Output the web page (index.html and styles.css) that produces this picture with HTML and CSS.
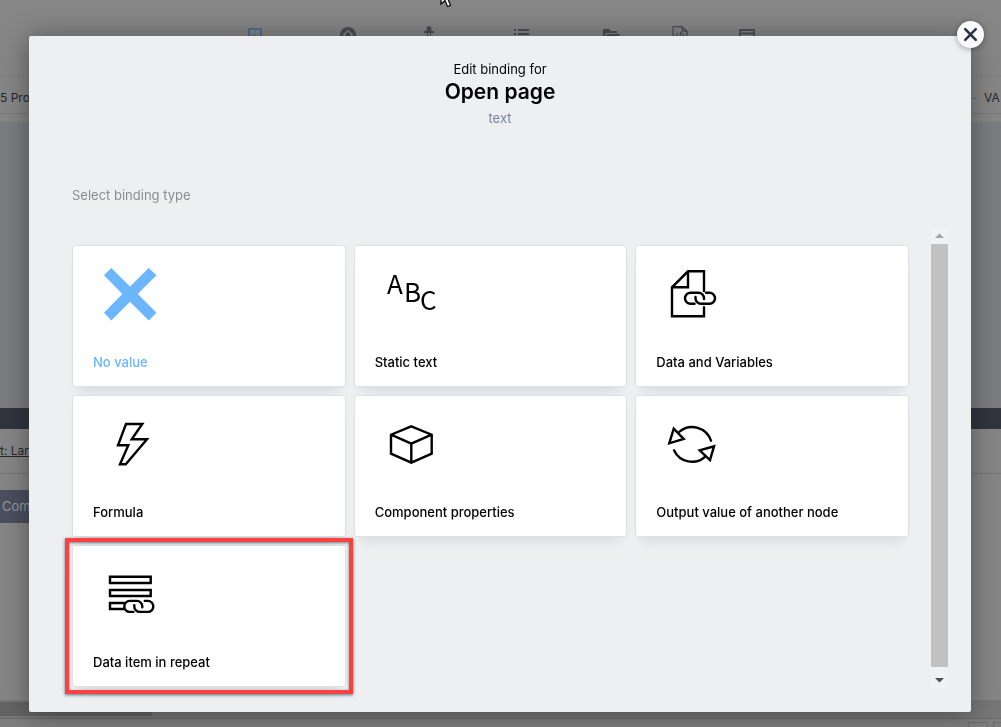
FILE: index.html
```html
<!DOCTYPE html>
<html lang="en">
<head>
<meta charset="utf-8">
<title>Edit binding</title>
<link rel="stylesheet" href="styles.css">
</head>
<body>
<div class="app" aria-hidden="true">
  <div class="toolbar">
    <svg class="tool tool-active" viewBox="0 0 18 18"><path d="M3 3h12v14H3z" fill="none" stroke="currentColor" stroke-width="1.5"/><path d="M9 5v9M5 9h9" stroke="currentColor" stroke-dasharray="1.5 1.5"/></svg>
    <svg class="tool" viewBox="0 0 18 18"><circle cx="9" cy="9" r="8" fill="currentColor"/><path d="M4 9l5-4 5 4M6 8v5M12 8v5" fill="none" stroke="#868687" stroke-width="1.4"/></svg>
    <svg class="tool" viewBox="0 0 18 18"><path d="M9 0a2.500 2.500 0 0 1 2.500 2.500V5H14v2H4V5h2.500V2.500A2.500 2.500 0 0 1 9 0zM7 7h1v8H7zM10 7h1v8h-1z" fill="currentColor"/></svg>
    <svg class="tool" viewBox="0 0 18 18"><path d="M1 4h2M5 4h11M1 8h2M5 8h11" stroke="currentColor" stroke-width="1.800"/></svg>
    <svg class="tool" viewBox="0 0 18 18"><path d="M1 3h6l2 2h6v2H4l-2 6H1zM5 8h13l-3 6H3z" fill="currentColor"/></svg>
    <svg class="tool" viewBox="0 0 18 18"><path d="M2 .7h9l5 4.500V17H2zM11 .7v4.500h5M7 7l-2 3 2 3M11 7l2 3-2 3M10 6l-2 8" fill="none" stroke="currentColor" stroke-width="1.200"/></svg>
    <svg class="tool" viewBox="0 0 18 18"><path d="M2 4h14v12H2zM2 7.500h14" fill="none" stroke="currentColor" stroke-width="1.800"/></svg>
  </div>
  <div class="crumbs"><span>5 Pro</span><span class="dash"></span><span class="vars">VA</span></div>
  <div class="canvas"></div>
  <div class="darkbar"></div>
  <div class="layout-row"><span>t: Lar</span></div>
  <div class="tree"><div class="tree-item">Com</div></div>
  <div class="hscroll"><div class="hthumb"></div></div>
  <div class="status"><i></i><i></i></div>
</div>

<div class="overlay">
  <section class="dialog" role="dialog" aria-labelledby="title">
    <button class="close" aria-label="Close"><svg viewBox="0 0 28 28"><path d="M8.500 8.500l11 11M19.500 8.500l-11 11" stroke="#2b3145" stroke-width="2.600" stroke-linecap="round"/></svg></button>
    <header class="heading">
      <p class="kicker">Edit binding for</p>
      <h1 class="title" id="title">Open page</h1>
      <p class="kind">text</p>
    </header>
    <h2 class="prompt">Select binding type</h2>
    <div class="scroller">
      <div class="cards">
        <button class="card card-selected">
          <svg class="icon" viewBox="1 0 76 76"><path fill="currentColor" d="M12 19.300L19.300 12 38 30.500 56.700 12 64.500 19.300 45.700 38 64.500 56.700 56.700 64.500 38 45.700 19.300 64.500 12 56.700 30.300 38z"/></svg>
          <span>No value</span>
        </button>
        <button class="card">
          <svg class="icon letters" viewBox="1 0 76 76"><text x="13" y="38">A</text><text x="30" y="46">B</text><text x="46" y="54">C</text></svg>
          <span>Static text</span>
        </button>
        <button class="card">
          <svg class="icon line" viewBox="1 0 76 76"><path d="M49 35V15.300H33L17 31.300V60.300H49V51.300M33 15.300V31.300H17"/><path d="M39.500 47.700H35.500a5.500 5.500 0 0 1 0-11H43.500a5.500 5.500 0 0 1 5.500 5.500V43M40.500 41v1.200a5.500 5.500 0 0 0 5.500 5.500h8.500a5.500 5.500 0 0 0 0-11H51"/></svg>
          <span>Data and Variables</span>
        </button>
        <button class="card">
          <svg class="icon line" viewBox="1 0 76 76"><path d="M34 18H50.300L39.700 33.300H55L33.700 58.300H28L36.300 39.300H26z"/></svg>
          <span>Formula</span>
        </button>
        <button class="card">
          <svg class="icon line" viewBox="1 0 76 76"><path d="M37.300 20.300L57.700 28.700V47.700L37.300 56.700 17 47.700V28.700zM17 28.700l20.300 9 20.400-9M37.300 37.700v19"/></svg>
          <span>Component properties</span>
        </button>
        <button class="card">
          <svg class="icon line" viewBox="1 0 76 76"><path d="M24.500 25.700A19.700 19.700 0 0 1 56 34.700M19 44.300A19.700 19.700 0 0 0 50.500 50.300M18.700 22.700l10 10.300-14.400 4.300zM59 40.300L55 54 44.700 44.300z"/></svg>
          <span>Output value of another node</span>
        </button>
        <button class="card card-marked">
          <svg class="icon line" viewBox="1 0 76 76"><path d="M18 20.700H58.700V27H18zM18 34H58.700V40H18zM32 47H18V53H32"/><path transform="translate(1.800 8.200)" d="M39.500 47.700H36a5.500 5.500 0 0 1 0-11H43a5.500 5.500 0 0 1 5.500 5.500V43M40.500 41v1.200a5.500 5.500 0 0 0 5.500 5.500h8a5.500 5.500 0 0 0 0-11H51"/></svg>
          <span>Data item in repeat</span>
        </button>
      </div>
      <div class="scrollbar">
        <svg class="arrow" viewBox="0 0 17 17"><path d="M4 11h9L8.500 6.500z" fill="#a3a3a3"/></svg>
        <div class="thumb"></div>
        <svg class="arrow" viewBox="0 0 17 17"><path d="M4 7h9l-4.500 4.500z" fill="#505050"/></svg>
      </div>
    </div>
  </section>
</div>
<svg class="pointer" viewBox="0 0 14 22" aria-hidden="true"><path d="M1 1v16l4-3.500 2.500 6 3-1.200-2.500-6H13z" fill="#fff" stroke="#111" stroke-width="1.300"/></svg>
</body>
</html>
```

FILE: styles.css
```css
* { box-sizing: border-box; }
html, body { height: 100%; }
body {
  margin: 0;
  overflow: hidden;
  font-family: Inter, "Liberation Sans", sans-serif;
  font-size: 13px;
  line-height: 20px;
  color: #000;
}
h1, h2, p { margin: 0; font-weight: 400; }

/* Dimmed editor */
.app { height: 100%; display: flex; flex-direction: column; background: #868687; color: #25272b; font-size: 12px; }
.toolbar {
  flex: none;
  height: 77px;
  padding: 26px 0 0 209px;
  display: grid;
  grid-template-columns: 92px 94px 67px 119px 60px 77px 57px;
  justify-items: center;
  align-items: start;
  color: #4d4e52;
  border-bottom: 1px solid #7f7f80;
}
.tool { width: 18px; height: 18px; }
.tool-active { color: #3d6795; }
.crumbs { flex: none; height: 37px; display: flex; align-items: center; padding-top: 6px; border-bottom: 1px solid #78797b; }
.crumbs span { white-space: nowrap; }
.dash { margin-left: auto; width: 8px; height: 1px; background: #6c6d6f; }
.vars { width: 17px; margin-left: 8px; }
.canvas { flex: none; height: 294px; border-top: 8px solid #868687; background: #7b7d81; }
.darkbar { flex: none; height: 21px; background: #32353e; }
.layout-row { flex: none; height: 45px; display: flex; align-items: center; border-bottom: 1px solid #757577; text-decoration: underline; }
.tree { flex: 1; padding-top: 16px; }
.tree-item { height: 33px; width: 240px; padding: 6px 2px; background: #4b4f5e; color: #9699a0; font-size: 13px; }
.hscroll { flex: none; height: 19px; padding-top: 2px; background: #777778; border-bottom: 1px solid #69696a; }
.hthumb { width: 152px; height: 14px; background: #646465; }
.status { flex: none; height: 8px; padding: 3px 0 0 968px; display: flex; gap: 5px; background: #7e7e7f; overflow: hidden; }
.status i { flex: none; width: 20px; height: 12px; border: 1px solid #6b6b6d; }

/* Dialog */
.overlay { position: fixed; inset: 0; display: flex; padding: 36px 30px 15px 29px; }
.dialog {
  position: relative;
  flex: 1;
  display: flex;
  flex-direction: column;
  padding: 23px 23px 24px 43px;
  background: #eeeff1;
  border-radius: 2px;
  box-shadow: 0 2px 28px rgba(0, 0, 0, .4);
}
.close {
  position: absolute;
  top: -15px;
  right: -13px;
  width: 27px;
  height: 27px;
  padding: 0;
  border: 0;
  border-radius: 50%;
  background: #fafafa;
  box-shadow: 0 1px 6px rgba(0, 0, 0, .35);
}
.close svg { display: block; }
.heading { text-align: center; padding-right: 20px; }
.title { font-size: 21px; line-height: 25px; font-weight: 600; }
.kind { line-height: 28px; color: #78849c; }
.prompt { margin-top: 53px; font-size: 13px; line-height: 20px; color: #8b8c8f; }
.scroller { flex: 1; display: flex; gap: 22px; margin-top: 22px; min-height: 0; }
.cards {
  flex: 1;
  padding-top: 18px;
  display: grid;
  grid-template-columns: repeat(3, 1fr);
  gap: 8px;
  align-content: start;
}
.card {
  position: relative;
  display: flex;
  flex-direction: column;
  align-items: flex-start;
  gap: 20px;
  padding: 10px 20px 14px;
  border: 1px solid #dfe0e3;
  border-radius: 3px;
  background: #fff;
  color: #000;
  font: 500 13px/20px Inter, "Liberation Sans", sans-serif;
  text-align: left;
  box-shadow: 0 10px 12px -8px rgba(30, 35, 60, .14);
}
.card-selected { color: #6cb5ff; }
.card-marked::after {
  content: "";
  position: absolute;
  inset: -8px;
  border: 4px solid #fd4040;
  box-shadow: 0 1px 3px rgba(20, 60, 70, .7), inset 0 1px 3px rgba(20, 60, 70, .6);
}
.icon { width: 76px; height: 76px; }
.line { fill: none; stroke: #000; stroke-width: 2.4; stroke-linecap: round; }
.letters { font: 400 26px "Noto Sans CJK SC", "Noto Sans", sans-serif; }

.scrollbar { width: 17px; display: flex; flex-direction: column; background: #f0f1f2; }
.arrow { flex: none; width: 17px; height: 17px; }
.thumb { flex: 1; margin-bottom: 4px; background: #c1c1c1; }

.pointer { position: fixed; left: 440px; top: -13px; width: 14px; height: 22px; }
```
